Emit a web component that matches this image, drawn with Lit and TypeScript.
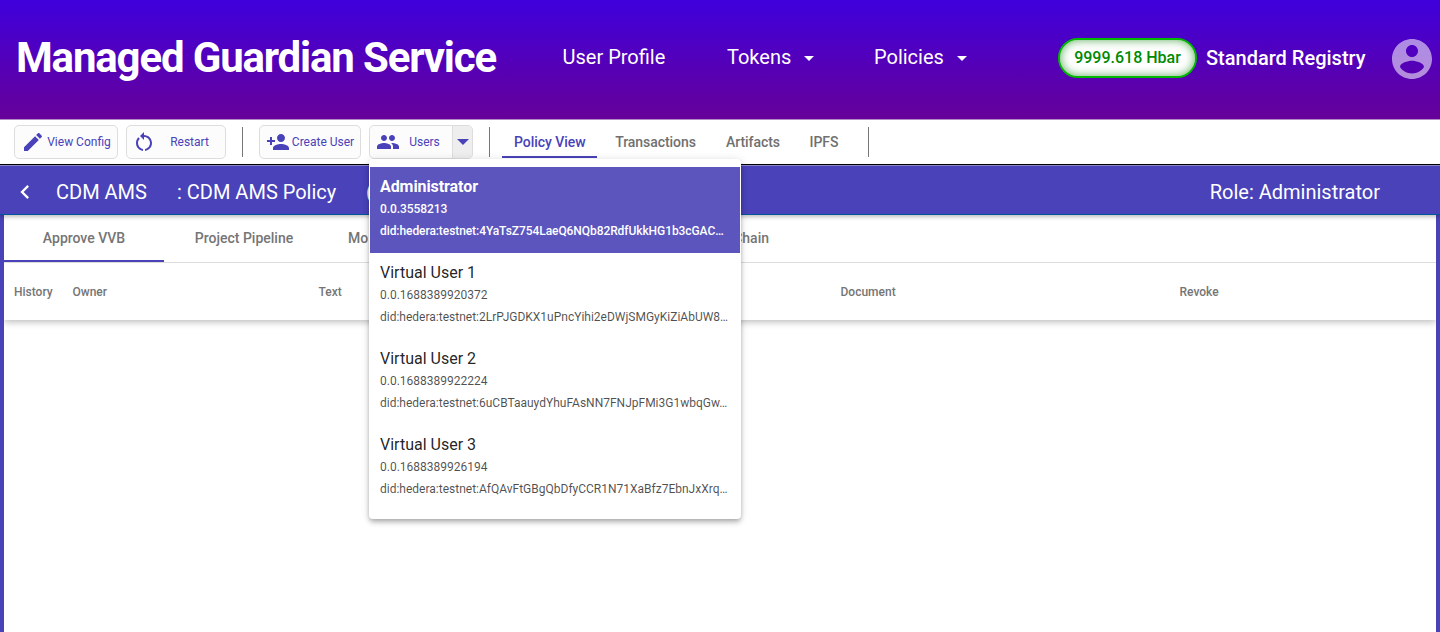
import { LitElement, html, css, svg } from "lit";
import { customElement, property } from "lit/decorators.js";
import { classMap } from "lit/directives/class-map.js";

const ICONS = {
  edit: svg`<path d="M3 17.25V21h3.75L17.81 9.94l-3.75-3.75L3 17.25zM20.71 7.04c.39-.39.39-1.02 0-1.41l-2.34-2.34c-.39-.39-1.02-.39-1.41 0l-1.83 1.83 3.75 3.75 1.83-1.83z"/>`,
  restart: svg`<path d="M12 5V2L8 6l4 4V7c3.31 0 6 2.69 6 6 0 2.97-2.17 5.43-5 5.91v2.02c3.95-.49 7-3.85 7-7.93 0-4.42-3.58-8-8-8zM6 13c0-1.65.67-3.15 1.76-4.24L6.34 7.34C4.9 8.79 4 10.79 4 13c0 4.08 3.05 7.44 7 7.93v-2.02c-2.83-.48-5-2.94-5-5.91z"/>`,
  personAdd: svg`<path d="M15 12c2.21 0 4-1.79 4-4s-1.79-4-4-4-4 1.79-4 4 1.79 4 4 4zm-9-2V7H4v3H1v2h3v3h2v-3h3v-2H6zm9 4c-2.67 0-8 1.34-8 4v2h16v-2c0-2.66-5.33-4-8-4z"/>`,
  people: svg`<path d="M16 11c1.66 0 2.99-1.34 2.99-3S17.66 5 16 5c-1.66 0-3 1.34-3 3s1.34 3 3 3zm-8 0c1.66 0 2.99-1.34 2.99-3S9.66 5 8 5C6.34 5 5 6.34 5 8s1.34 3 3 3zm0 2c-2.33 0-7 1.17-7 3.5V19h14v-2.5c0-2.33-4.67-3.5-7-3.5zm8 0c-.29 0-.62.02-.97.05 1.16.84 1.97 1.97 1.97 3.45V19h6v-2.5c0-2.33-4.67-3.5-7-3.5z"/>`,
  dropDown: svg`<path d="M7 10l5 5 5-5z"/>`,
  back: svg`<path d="M15.41 7.41L14 6l-6 6 6 6 1.41-1.41L10.83 12z"/>`,
  account: svg`<path d="M12 2C6.48 2 2 6.48 2 12s4.48 10 10 10 10-4.48 10-10S17.52 2 12 2zm0 3c1.66 0 3 1.34 3 3s-1.34 3-3 3-3-1.34-3-3 1.34-3 3-3zm0 14.2c-2.5 0-4.71-1.28-6-3.22.03-1.99 4-3.08 6-3.08 1.99 0 5.97 1.09 6 3.08-1.29 1.94-3.5 3.22-6 3.22z"/>`,
};

@customElement("ui-icon")
export class UiIcon extends LitElement {
  @property() name: keyof typeof ICONS = "edit";
  static styles = css`
    :host { display: block; flex: none; width: 24px; height: 24px; }
    svg { display: block; width: 100%; height: 100%; fill: currentColor; }
  `;
  render() {
    return html`<svg viewBox="0 0 24 24">${ICONS[this.name]}</svg>`;
  }
}

@customElement("user-menu")
export class UserMenu extends LitElement {
  users = [
    { name: "Administrator", id: "0.0.3558213", did: "did:hedera:testnet:4YaTsZ754LaeQ6NQb82RdfUkkHG1b3cGAC…", active: true },
    { name: "Virtual User 1", id: "0.0.1688389920372", did: "did:hedera:testnet:2LrPJGDKX1uPncYihi2eDWjSMGyKiZiAbUW8…", active: false },
    { name: "Virtual User 2", id: "0.0.1688389922224", did: "did:hedera:testnet:6uCBTaauydYhuFAsNN7FNJpFMi3G1wbqGw…", active: false },
    { name: "Virtual User 3", id: "0.0.1688389926194", did: "did:hedera:testnet:AfQAvFtGBgQbDfyCCR1N71XaBfz7EbnJxXrq…", active: false },
  ];
  static styles = css`
    :host {
      display: block; box-sizing: border-box; width: 372px; height: 360px;
      padding: 8px 1px; background: #fff; border-radius: 4px;
      box-shadow: 0 2px 4px -1px rgba(0,0,0,.2), 0 4px 5px rgba(0,0,0,.14), 0 1px 10px rgba(0,0,0,.12);
    }
    .user {
      box-sizing: border-box; height: 86px; padding: 8px 10px 0; white-space: nowrap;
      font-size: 12px; line-height: 22px; color: rgba(0,0,0,.7);
    }
    .name { font-size: 16px; line-height: 23px; color: rgba(0,0,0,.87); }
    .active { background: #5b55bd; color: #fff; font-weight: 500; letter-spacing: -.075px; }
    .active .name { color: #fff; font-weight: 700; }
    .user div { width: max-content; }
  `;
  render() {
    return this.users.map(
      (u) => html`<div class=${classMap({ user: true, active: u.active })}>
        <div class="name">${u.name}</div>
        <div class="id">${u.id}</div>
        <div class="did">${u.did}</div>
      </div>`
    );
  }
}

@customElement("app-root")
export class AppRoot extends LitElement {
  static styles = css`
    :host {
      display: flex; flex-direction: column; width: 1440px; height: 632px; overflow: hidden;
      font-family: Roboto, sans-serif; background: #fff; white-space: nowrap;
    }
    .header {
      box-sizing: border-box; flex: none; height: 120px; display: flex; align-items: center;
      padding: 0 8px 4px 16px; color: #fff; border-bottom: 1px solid #b28ac6;
      background: linear-gradient(#3f00dc, #660099);
    }
    .brand { width: 546.5px; font-size: 42px; font-weight: 700; letter-spacing: -1.17px; }
    .nav { display: flex; align-items: center; font-size: 20px; margin-top: -2px; }
    .profile { width: 164.5px; }
    .drop { display: flex; align-items: center; gap: 6px; width: 147px; }
    .drop ui-icon { margin-top: 3px; }
    .account { margin-left: auto; display: flex; align-items: center; margin-top: 1px; }
    .balance {
      box-sizing: border-box; width: 139px; height: 40px; border: 2px solid #00b800; border-radius: 20px;
      background: #fff; color: #008a00; font-size: 16px; font-weight: 500; line-height: 35px; text-align: center;
      box-shadow: inset 0 0 10px rgba(0,128,0,.65);
    }
    .registry { margin-left: 9px; width: 182px; font-size: 20px; font-weight: 500; }
    .account ui-icon { width: 48px; height: 48px; color: rgba(255,255,255,.55); margin: 2px -4px 0 0; }
    .toolbar {
      box-sizing: border-box; flex: none; height: 45px; display: flex; align-items: flex-start;
      padding: 5px 0 0 14px; border-bottom: 1px solid #000; color: #4942b9;
    }
    .btn {
      box-sizing: border-box; height: 34px; display: flex; align-items: center; border: 1px solid #ddd;
      border-radius: 5px; background: #fcfcfc; font-size: 12px; padding: 0 4px 0 6px; margin-right: 8px;
    }
    .btn .label { flex: 1; text-align: center; }
    .config { width: 104px; }
    .restart { width: 100px; padding-left: 5px; }
    .restart ui-icon { margin-right: 2px; }
    .create { width: 102px; }
    .users { width: 104px; padding-right: 0; margin-right: 0; }
    .users .label { padding-right: 4px; }
    .users .label { padding-left: 1px; }
    .caret {
      height: 100%; width: 19px; border-left: 1px solid #ddd; background: #eee; display: flex;
      align-items: center; justify-content: center; border-radius: 0 4px 4px 0; box-sizing: border-box; width: 20px;
    }
    .caret::after { content: ""; border: 6px solid transparent; border-top-color: #4942b9; border-bottom: 0; }
    .rule { width: 1px; height: 30px; margin-top: 2px; background: #777; }
    .r1 { margin: 2px 16px 0 8px; }
    .r2 { margin: 2px 12px 0 16px; }
    .views { display: flex; font-size: 14px; font-weight: 500; color: #707070; letter-spacing: -.05px; }
    .view { box-sizing: border-box; height: 33px; padding: 0 12px; line-height: 34px; text-align: center; }
    .view.on { width: 95px; color: #4942b9; border-bottom: 2px solid #4942b9; }
    .v2 { width: 117px; }
    .v3 { width: 77px; }
    .v4 { width: 66px; }
    .v4 + .rule { margin-left: 11px; }
    .menu { position: absolute; left: 369px; top: 159px; z-index: 2; }
    .title {
      box-sizing: border-box; flex: none; height: 50px; display: flex; align-items: center; color: #fff;
      padding: 3px 60px 0 11px; font-size: 20px; background: #4942b9;
      border-top: 1px solid #8a86c8; border-bottom: 1px solid #00559b;
      box-shadow: 0 2px 4px rgba(0,0,0,.25); z-index: 1;
    }
    .title ui-icon { width: 28px; height: 28px; margin-right: 17px; }
    .policy { width: 121px; }
    .topic { width: 189px; }
    .role { margin-left: auto; }
    .body { flex: 1; border: solid #4942b9; border-width: 0 4px; }
    .tabs {
      box-sizing: border-box; height: 48px; display: flex; border-bottom: 1px solid #ddd;
      font-size: 14px; font-weight: 500; color: #757575; line-height: 47px; text-align: center;
    }
    .tab { box-sizing: border-box; height: 47px; width: 160px; }
    .tab.on { border-bottom: 2px solid #4942b9; }
    .monitoring { width: 177px; padding-left: 24px; text-align: left; }
    .chain { margin-left: 48px; width: 220px; text-align: right; }
    .columns {
      box-sizing: border-box; height: 57px; padding-left: 10px; display: flex; font-size: 12px;
      font-weight: 500; line-height: 59px; color: #757575; box-shadow: 0 2px 7px rgba(0,0,0,.27);
      clip-path: inset(0 0 -12px 0);
    }
    .c1 { width: 58.5px; } .c2 { width: 246px; } .c3 { width: 522px; } .c4 { width: 339px; }
  `;
  render() {
    return html`
      <header class="header">
        <div class="brand"><span>Managed Guardian Service</span></div>
        <nav class="nav">
          <span class="profile">User Profile</span>
          <span class="drop">Tokens<ui-icon name="dropDown"></ui-icon></span>
          <span class="drop">Policies<ui-icon name="dropDown"></ui-icon></span>
        </nav>
        <div class="account">
          <div class="balance">9999.618 Hbar</div>
          <div class="registry">Standard Registry</div>
          <ui-icon name="account"></ui-icon>
        </div>
      </header>
      <div class="toolbar">
        <div class="btn config"><ui-icon name="edit"></ui-icon><span class="label">View Config</span></div>
        <div class="btn restart"><ui-icon name="restart"></ui-icon><span class="label">Restart</span></div>
        <div class="rule r1"></div>
        <div class="btn create"><ui-icon name="personAdd"></ui-icon><span class="label">Create User</span></div>
        <div class="btn users">
          <ui-icon name="people"></ui-icon><span class="label">Users</span><span class="caret"></span>
        </div>
        <div class="rule r2"></div>
        <div class="views">
          <div class="view on">Policy View</div>
          <div class="view v2">Transactions</div>
          <div class="view v3">Artifacts</div>
          <div class="view v4">IPFS</div>
          <div class="rule"></div>
        </div>
      </div>
      <div class="title">
        <ui-icon name="back"></ui-icon>
        <span class="policy">CDM AMS</span>
        <span class="topic">: CDM AMS Policy</span>
        <span>(</span>
        <span class="role">Role: Administrator</span>
      </div>
      <main class="body">
        <div class="tabs">
          <div class="tab on">Approve VVB</div>
          <div class="tab">Project Pipeline</div>
          <div class="tab monitoring">Mo</div>
          <div class="tab chain">Chain</div>
        </div>
        <div class="columns">
          <span class="c1">History</span><span class="c2">Owner</span><span class="c3">Text</span>
          <span class="c4">Document</span><span>Revoke</span>
        </div>
      </main>
      <user-menu class="menu"></user-menu>
    `;
  }
}
